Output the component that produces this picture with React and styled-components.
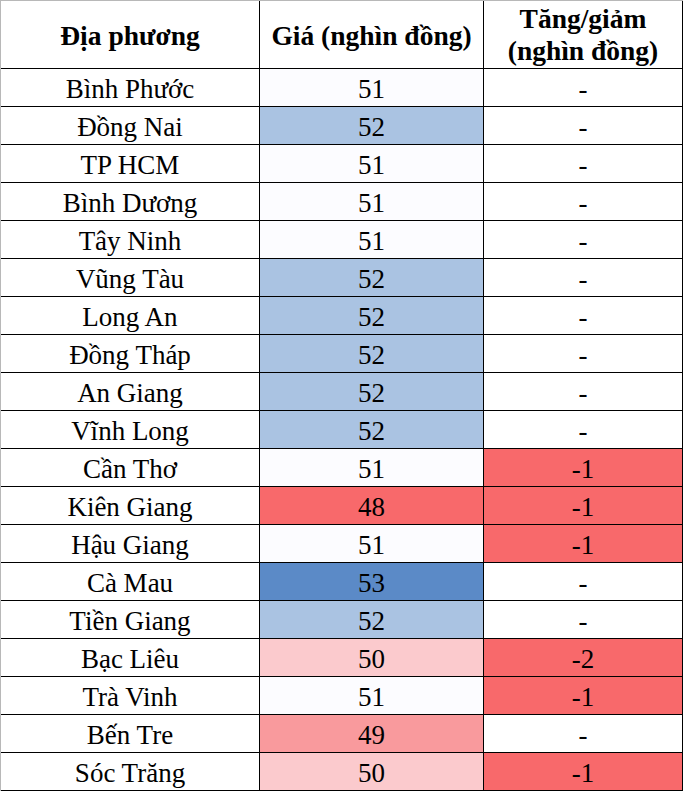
import React from "react";
import styled, { createGlobalStyle } from "styled-components";

const GlobalStyle = createGlobalStyle`
  html, body {
    margin: 0;
    padding: 0;
    background: #ffffff;
  }
  body {
    font-family: "Liberation Serif", "DejaVu Serif", serif;
    color: #000;
  }
`;

const fills = {
  white: "#fcfcff",
  blue: "#aac3e2",
  darkBlue: "#5b8ac7",
  red: "#f8696b",
  pink: "#f99a9d",
  lightPink: "#fbcacd",
  none: "#ffffff",
};

const priceFill = (price) => {
  if (price === 53) return "darkBlue";
  if (price === 52) return "blue";
  if (price === 51) return "white";
  if (price === 50) return "lightPink";
  if (price === 49) return "pink";
  return "red";
};

const rows = [
  ["Bình Phước", 51, "-"],
  ["Đồng Nai", 52, "-"],
  ["TP HCM", 51, "-"],
  ["Bình Dương", 51, "-"],
  ["Tây Ninh", 51, "-"],
  ["Vũng Tàu", 52, "-"],
  ["Long An", 52, "-"],
  ["Đồng Tháp", 52, "-"],
  ["An Giang", 52, "-"],
  ["Vĩnh Long", 52, "-"],
  ["Cần Thơ", 51, "-1"],
  ["Kiên Giang", 48, "-1"],
  ["Hậu Giang", 51, "-1"],
  ["Cà Mau", 53, "-"],
  ["Tiền Giang", 52, "-"],
  ["Bạc Liêu", 50, "-2"],
  ["Trà Vinh", 51, "-1"],
  ["Bến Tre", 49, "-"],
  ["Sóc Trăng", 50, "-1"],
];

const Table = styled.div`
  display: grid;
  grid-template-columns: 259px 224px 199px;
  width: 682px;
  border-left: 1px solid #b8b8b8;
  border-top: 1px solid #b8b8b8;
  font-family: "Liberation Serif", "DejaVu Serif", serif;
`;

const Cell = styled.div`
  display: flex;
  align-items: center;
  justify-content: center;
  box-sizing: border-box;
  height: 38px;
  padding-top: 4px;
  border-right: 1px solid #000;
  border-bottom: 1px solid #000;
  background: ${(p) => fills[p.$fill || "none"]};
  font-size: 27px;
  line-height: 1;
  white-space: nowrap;
`;

const HeadCell = styled(Cell)`
  height: 68px;
  padding-top: 3px;
  font-weight: bold;
  font-size: 27.5px;
  line-height: 32px;
  text-align: center;
  flex-direction: column;
`;

const HeadLines = styled.span`
  display: flex;
  flex-direction: column;
  margin-top: -2px;
`;

export default function App() {
  return (
    <>
      <GlobalStyle />
      <Table>
        <HeadCell>Địa phương</HeadCell>
        <HeadCell>Giá (nghìn đồng)</HeadCell>
        <HeadCell>
          <HeadLines>
            <span>Tăng/giảm</span>
            <span>(nghìn đồng)</span>
          </HeadLines>
        </HeadCell>
        {rows.map(([place, price, change]) => (
          <React.Fragment key={place}>
            <Cell>{place}</Cell>
            <Cell $fill={priceFill(price)}>{price}</Cell>
            <Cell $fill={change === "-" ? "none" : "red"}>{change}</Cell>
          </React.Fragment>
        ))}
      </Table>
    </>
  );
}
